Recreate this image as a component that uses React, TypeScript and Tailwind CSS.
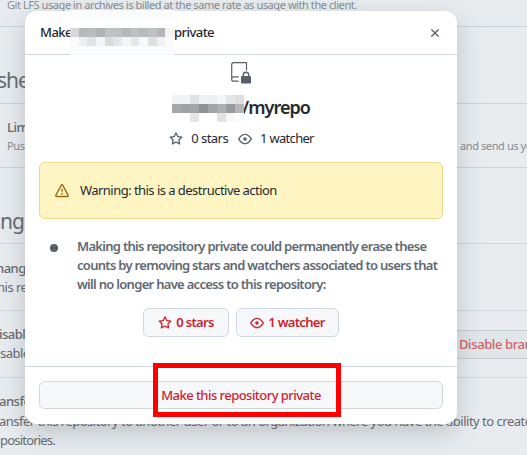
import type { ReactNode } from "react";

const StarPath =
  "M8 .25a.75.75 0 0 1 .673.418l1.882 3.815 4.21.612a.75.75 0 0 1 .416 1.279l-3.046 2.97.719 4.192a.751.751 0 0 1-1.088.791L8 12.347l-3.766 1.98a.75.75 0 0 1-1.088-.79l.72-4.194L.818 6.374a.75.75 0 0 1 .416-1.28l4.21-.611L7.327.668A.75.75 0 0 1 8 .25Zm0 2.445L6.615 5.5a.75.75 0 0 1-.564.41l-3.097.45 2.24 2.184a.75.75 0 0 1 .216.664l-.528 3.084 2.769-1.456a.75.75 0 0 1 .698 0l2.77 1.456-.53-3.084a.75.75 0 0 1 .216-.664l2.24-2.183-3.096-.45a.75.75 0 0 1-.564-.41L8 2.694Z";
const EyePath =
  "M8 2c1.981 0 3.671.992 4.933 2.078 1.27 1.091 2.187 2.345 2.637 3.023a1.62 1.62 0 0 1 0 1.798c-.45.678-1.367 1.932-2.637 3.023C11.67 13.008 9.981 14 8 14c-1.981 0-3.671-.992-4.933-2.078C1.797 10.83.88 9.576.43 8.898a1.62 1.62 0 0 1 0-1.798c.45-.677 1.367-1.931 2.637-3.022C4.33 2.992 6.019 2 8 2ZM1.679 7.932a.12.12 0 0 0 0 .136c.411.622 1.241 1.75 2.366 2.717C5.176 11.758 6.527 12.5 8 12.5c1.473 0 2.825-.742 3.955-1.715 1.124-.967 1.954-2.096 2.366-2.717a.12.12 0 0 0 0-.136c-.412-.621-1.242-1.75-2.366-2.717C10.824 4.242 9.473 3.5 8 3.5c-1.473 0-2.825.742-3.955 1.715-1.124.967-1.954 2.096-2.366 2.717ZM8 10a2 2 0 1 1-.001-3.999A2 2 0 0 1 8 10Z";
const AlertPath =
  "M6.457 1.047c.659-1.234 2.427-1.234 3.086 0l6.082 11.378A1.75 1.75 0 0 1 14.082 15H1.918a1.75 1.75 0 0 1-1.543-2.575Zm1.763.707a.25.25 0 0 0-.44 0L1.698 13.132a.25.25 0 0 0 .22.368h12.164a.25.25 0 0 0 .22-.368Zm.53 3.996v2.5a.75.75 0 0 1-1.5 0v-2.5a.75.75 0 0 1 1.5 0ZM9 11a1 1 0 1 1-2 0 1 1 0 0 1 2 0Z";
const XPath =
  "M3.72 3.72a.75.75 0 0 1 1.06 0L8 6.94l3.22-3.22a.75.75 0 1 1 1.06 1.06L9.06 8l3.22 3.22a.75.75 0 1 1-1.06 1.06L8 9.06l-3.22 3.22a.75.75 0 0 1-1.06-1.06L6.94 8 3.72 4.78a.75.75 0 0 1 0-1.06Z";

function Octicon({ d, className }: { d: string; className: string }) {
  return (
    <svg viewBox="0 0 16 16" fill="currentColor" className={className}>
      <path d={d} />
    </svg>
  );
}

function RepoLocked() {
  return (
    <svg width="22" height="24" viewBox="0 0 22 24" fill="none" className="text-[#57606a]">
      <path
        d="M16.500 9.500V1.700H3.700A2 2 0 0 0 1.700 3.700v14.500A2 2 0 0 0 3.700 20.200h5M1.700 17.800A2 2 0 0 1 3.700 15.800h5"
        stroke="currentColor"
        strokeWidth="1.200"
      />
      <rect x="11" y="15" width="10" height="7.500" rx="1.300" fill="currentColor" />
      <path d="M13.300 15.500v-1.500a2.700 2.700 0 0 1 5.400 0v1.500" stroke="currentColor" strokeWidth="1.400" />
    </svg>
  );
}

/* Pixelated strip that hides an account name. */
function Mosaic({ rows }: { rows: string[][] }) {
  return (
    <div className="flex flex-col">
      {rows.map((row, y) => (
        <div key={y} className="flex">
          {row.map((fill, x) => (
            <div key={x} className="size-[9px]" style={{ backgroundColor: fill }} />
          ))}
        </div>
      ))}
    </div>
  );
}

const ownerRows = [
  ["#f2f2f2", "#f2f3f3", "#e1e3e3", "#f0f0f0", "#efefef", "#f4f5f5", "#e5e6e6", "#dfdfe0"],
  ["#a6a7a9", "#a0a1a3", "#a4a5a6", "#909193", "#a2a3a4", "#aeafb0", "#989a9c", "#b5b6b7"],
  ["#fff", "#fff", "#e4e7e6", "#fff", "#fff", "#e0e3e2", "#f6f7f6", "#fafbfa"],
];
const headerRows = [
  ["#d8d8da", "#b8b9bc", "#babbbd", "#b1b2b4", "#c1c2c4", "#bfc0c2", "#b5b6b8", "#bfc0c2", "#babbbd", "#bfc0c2", "#b5b6b8", "#f3f3f5"],
  ["#f9fafa", "#eeefef", "#e1e4e3", "#f4f5f4", "#d8dbdc", "#e5e7e7", "#f3f5f4", "#e6e8e8", "#f8faf9", "#dfe0e1", "#f0f1f1", "#fafafb"],
];

function CountButton({ d, children, className }: { d: string; children: ReactNode; className: string }) {
  return (
    <button
      className={`flex h-[29px] items-center justify-center gap-1 rounded-md border border-[#d0d7de] bg-[#f6f8fa] pt-px font-semibold tracking-[-0.7px] text-[#cf222e] ${className}`}
    >
      <Octicon d={d} className="size-3.5 shrink-0" />
      <span>{children}</span>
    </button>
  );
}

function Backdrop() {
  return (
    <div className="flex h-full flex-col whitespace-nowrap text-[13px] leading-[19px] tracking-[-0.5px] text-[#666b71]">
      <div className="h-[27px] border-b border-[#cbd2d8] pl-[7px] text-[11px] leading-[10px] tracking-[-0.43px] text-[#868c92]">
        Git LFS usage in archives is billed at the same rate as usage with the client.
      </div>
      <h2 className="-ml-[3px] h-[77px] border-b border-[#cbd2d8] pt-[37px] text-[21px] leading-8 tracking-[-1px]">shes</h2>
      <div className="h-[64px] border-b border-[#cbd2d8] pl-[7px] pt-[14px]">
        <div className="font-medium">Limit</div>
        <div className="flex text-[11px] leading-[17px] tracking-[-0.4px] text-[#868c92]">
          <span className="w-[453px] shrink-0">Pushes</span>
          <span>and send us yo</span>
        </div>
      </div>
      <h2 className="h-[76px] border-b border-[#e8c9cf] pt-[37px] text-[21px] leading-8 tracking-[-0.9px]">ng</h2>
      <div className="h-[67px] border-b border-[#cfd5da] pt-[15px]">
        <div className="-ml-[4px] font-medium">hange</div>
        <div className="-ml-[3px]">his repo</div>
      </div>
      <div className="flex h-[67px] items-center justify-between border-b border-[#cfd5da]">
        <div>
          <div className="-ml-px font-medium">isable</div>
          <div>sable</div>
        </div>
        <div className="flex h-[29px] w-[82px] items-center border-y border-[#c3cbd2] bg-[#e1e6e9] pl-[14px] font-medium tracking-[-0.4px] text-[#d1616a]">
          Disable bran
        </div>
      </div>
      <div className="pt-[14px]">
        <div className="-ml-px font-medium">ansfer</div>
        <div className="-ml-px pt-px">
          ansfer this repository to another user or to an organization where you have the ability to create
        </div>
        <div className="tracking-[-0.8px]">positories.</div>
      </div>
    </div>
  );
}

export default function App() {
  return (
    <div className="relative h-[455px] w-[527px] overflow-hidden bg-[#e8ecef] font-['Noto_Sans',sans-serif]">
      <Backdrop />
      <div
        role="dialog"
        className="absolute left-[25px] top-[11px] flex h-[413px] w-[432px] flex-col whitespace-nowrap rounded-xl bg-white text-[13px] tracking-[-0.54px] text-[#24292f] shadow-[0_8px_24px_rgba(66,74,83,0.26)]"
      >
        <header className="relative flex h-11 shrink-0 items-center border-b border-[#d0d7de] pl-[15px] pr-[15px] font-medium">
          <span className="w-[134px]">Make</span>
          <span className="grow">private</span>
          <Octicon d={XPath} className="size-3.5 text-[#57606a]" />
          <div className="absolute left-[45px] top-[-1px] h-[45px] w-[104px] overflow-hidden bg-[#fafbfc]">
            <div className="mt-[9px] bg-white pt-[9px]">
              <Mosaic rows={headerRows} />
            </div>
          </div>
        </header>

        <main className="flex h-[311px] shrink-0 flex-col items-center">
          <div className="mt-[6px] h-6">
            <RepoLocked />
          </div>
          <h1 className="mt-[8px] flex h-7 items-center text-[18px] font-semibold tracking-[-0.95px]">
            <span className="z-10 -mr-[2px] mt-[3px]">
              <Mosaic rows={ownerRows} />
            </span>
            <span>/myrepo</span>
          </h1>
          <div className="mt-[8px] flex h-5 items-center pl-px">
            <Octicon d={StarPath} className="mr-2 size-3.5 text-[#57606a]" />
            <span className="mr-[10px]">0 stars</span>
            <Octicon d={EyePath} className="mr-2 size-3.5 text-[#57606a]" />
            <span className="tracking-[-0.7px]">1 watcher</span>
          </div>
          <div className="mt-[13px] flex h-[57px] w-[404px] items-center rounded-md border border-[#eed888] bg-[#fff5c2] pl-[15px]">
            <Octicon d={AlertPath} className="mr-[11px] size-3.5 text-[#9a6700]" />
            <span>Warning: this is a destructive action</span>
          </div>
          <div className="mt-[18px] flex w-[404px] pl-[11px] font-semibold leading-[19px] tracking-[-0.7px] text-[#606973]">
            <span className="mr-[19px] mt-[7px] size-2 shrink-0 rounded-full bg-[#57606a]" />
            <p>
              Making this repository private could permanently erase these
              <br />
              counts by removing stars and watchers associated to users that
              <br />
              will no longer have access to this repository:
            </p>
          </div>
          <div className="mt-[14px] flex gap-[7px]">
            <CountButton d={StarPath} className="w-[86px]">0 stars</CountButton>
            <CountButton d={EyePath} className="w-[103px]">1 watcher</CountButton>
          </div>
        </main>

        <footer className="relative grow border-t border-[#d0d7de] px-[14px] pt-[14px]">
          <button className="h-7 w-full rounded-md border border-[#d0d7de] bg-[#f6f8fa] pt-px font-medium text-[#cf222e]">
            Make this repository private
          </button>
          <div className="absolute left-[128px] top-[-4px] h-[54px] w-[188px] border-5 border-[#fe0000]" />
        </footer>
      </div>
    </div>
  );
}
